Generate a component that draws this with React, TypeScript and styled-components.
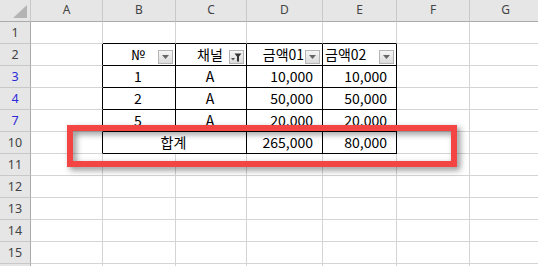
import React from "react";
import styled, {createGlobalStyle} from "styled-components";

const GlobalStyle = createGlobalStyle`
    body {
        margin: 0;
        background: #ffffff;
        overflow: hidden;
    }
`

const Colors = {
    grid: '#d4d4d4',
    headBg: '#e6e6e6',
    headLine: '#c8c8c8',
    headEdge: '#ababab',
    border: '#000000',
    filtered: '#2b2bd8',
}

const COLS = ['A', 'B', 'C', 'D', 'E', 'F', 'G']
const WIDTHS = [72, 73, 71, 76, 74, 73, 72]

const Sheet = styled.div`
    position: relative;
    width: 538px;
    height: 266px;
    overflow: hidden;
    font-family: "Noto Sans CJK KR", "Noto Sans", sans-serif;
`

const Row = styled.div`
    display: flex;
    height: 22px;
`

const Corner = styled.div`
    width: 31px;
    height: 22px;
    flex-shrink: 0;
    box-sizing: border-box;
    background: ${Colors.headBg};
    border-right: 1px solid ${Colors.headLine};
    border-bottom: 1px solid ${Colors.headEdge};
    display: flex;
    align-items: flex-end;
    justify-content: flex-end;
    padding: 0 3px 3px 0;
`

const ColHead = styled.div<{ $w: number }>`
    width: ${p => p.$w}px;
    height: 22px;
    flex-shrink: 0;
    box-sizing: border-box;
    background: ${Colors.headBg};
    border-right: 1px solid ${Colors.headLine};
    border-bottom: 1px solid ${Colors.headEdge};
    display: flex;
    align-items: center;
    justify-content: center;
    padding-bottom: 2px;
    font-family: "Noto Sans", sans-serif;
    font-size: 12px;
    color: #444444;
`

const RowHead = styled.div<{ $filtered?: boolean }>`
    width: 31px;
    height: 22px;
    flex-shrink: 0;
    box-sizing: border-box;
    background: ${Colors.headBg};
    border-right: 1px solid ${Colors.headEdge};
    border-bottom: 1px solid ${Colors.headLine};
    display: flex;
    align-items: center;
    justify-content: center;
    font-family: "Noto Sans", sans-serif;
    font-size: 12.5px;
    color: ${p => p.$filtered ? Colors.filtered : '#444444'};
`

interface CellProps {
    $w: number
    $r?: boolean
    $b?: boolean
    $align?: 'left' | 'center' | 'right'
}

const Cell = styled.div<CellProps>`
    position: relative;
    width: ${p => p.$w}px;
    height: 22px;
    flex-shrink: 0;
    box-sizing: border-box;
    border-right: 1px solid ${p => p.$r ? Colors.border : Colors.grid};
    border-bottom: 1px solid ${p => p.$b ? Colors.border : Colors.grid};
    display: flex;
    align-items: center;
    justify-content: ${p => p.$align === 'right' ? 'flex-end' : p.$align === 'left' ? 'flex-start' : 'center'};
    padding: 0 ${p => p.$align === 'right' ? 9 : 2}px 1px ${p => p.$align === 'left' ? 2 : 0}px;
    font-size: 14px;
    color: #000000;
    white-space: nowrap;
    overflow: hidden;
`

const DropButton = styled.div`
    position: absolute;
    right: 2px;
    bottom: 1px;
    width: 15px;
    height: 14px;
    box-sizing: border-box;
    border: 1px solid #b4b4b4;
    background: linear-gradient(#f6f6f6, #dcdcdc);
    display: flex;
    align-items: center;
    justify-content: center;
`

const Highlight = styled.div`
    position: absolute;
    left: 67px;
    top: 125px;
    width: 390px;
    height: 42px;
    box-sizing: border-box;
    border: 6px solid #f44545;
    filter: drop-shadow(3px 3px 3px rgba(0, 0, 0, 0.45));
    pointer-events: none;
`

function Dropdown({filtered}: { filtered?: boolean }) {
    return <DropButton>
        {filtered
            ? <svg width="11" height="9" viewBox="0 0 11 9">
                <polygon points="0,5 4,5 2,7.5" fill="#555"/>
                <polygon points="3.5,0.5 10.5,0.5 8,3.5 8,8.5 6,8.5 6,3.5" fill="#333"/>
            </svg>
            : <svg width="7" height="4" viewBox="0 0 7 4">
                <polygon points="0,0 7,0 3.5,4" fill="#666"/>
            </svg>}
    </DropButton>
}

interface DataRow {
    num: number
    label?: boolean
    filtered?: boolean
    cells: { text?: string, align?: 'left' | 'center' | 'right', span?: number, drop?: 'plain' | 'filter' }[]
    inTable?: boolean
    tableTop?: boolean
}

const rows: DataRow[] = [
    {num: 1, cells: [], tableTop: true},
    {
        num: 2, inTable: true, cells: [
            {text: '№', drop: 'plain'},
            {text: '채널', drop: 'filter'},
            {text: '금액01', drop: 'plain'},
            {text: '금액02', align: 'left', drop: 'plain'},
        ]
    },
    {num: 3, filtered: true, inTable: true, cells: [{text: '1'}, {text: 'A'}, {text: '10,000', align: 'right'}, {text: '10,000', align: 'right'}]},
    {num: 4, filtered: true, inTable: true, cells: [{text: '2'}, {text: 'A'}, {text: '50,000', align: 'right'}, {text: '50,000', align: 'right'}]},
    {num: 7, filtered: true, inTable: true, cells: [{text: '5'}, {text: 'A'}, {text: '20,000', align: 'right'}, {text: '20,000', align: 'right'}]},
    {num: 10, inTable: true, cells: [{text: '합계', span: 2}, {text: '265,000', align: 'right'}, {text: '80,000', align: 'right'}]},
    {num: 11, cells: []},
    {num: 12, cells: []},
    {num: 13, cells: []},
    {num: 14, cells: []},
    {num: 15, cells: []},
    // only a sliver of row 16 shows at the bottom edge
    {num: 16, label: false, cells: []},
]

function SheetRow({row}: { row: DataRow }) {
    const out: React.ReactNode[] = []
    // column A: right edge is the table's left border
    out.push(<Cell key="A" $w={WIDTHS[0]} $r={row.inTable}/>)
    let col = 1
    if (row.inTable) {
        row.cells.forEach((c, i) => {
            const span = c.span ?? 1
            const w = WIDTHS.slice(col, col + span).reduce((a, b) => a + b, 0)
            out.push(<Cell key={i} $w={w} $r $b $align={c.align}>
                {c.text}
                {c.drop && <Dropdown filtered={c.drop === 'filter'}/>}
            </Cell>)
            col += span
        })
    }
    for (; col < WIDTHS.length; col++) {
        out.push(<Cell key={COLS[col]} $w={WIDTHS[col]} $b={row.tableTop && col <= 4}/>)
    }
    return <Row>
        <RowHead $filtered={row.filtered}>{row.label === false ? null : row.num}</RowHead>
        {out}
    </Row>
}

export default function App() {
    return <Sheet>
        <GlobalStyle/>
        <Row>
            <Corner>
                <svg width="14" height="13" viewBox="0 0 14 13">
                    <polygon points="14,0 14,13 0,13" fill="#b4b4b4"/>
                </svg>
            </Corner>
            {COLS.map((c, i) => <ColHead key={c} $w={WIDTHS[i]}>{c}</ColHead>)}
        </Row>
        {rows.map(r => <SheetRow key={r.num} row={r}/>)}
        <Highlight/>
    </Sheet>
}
